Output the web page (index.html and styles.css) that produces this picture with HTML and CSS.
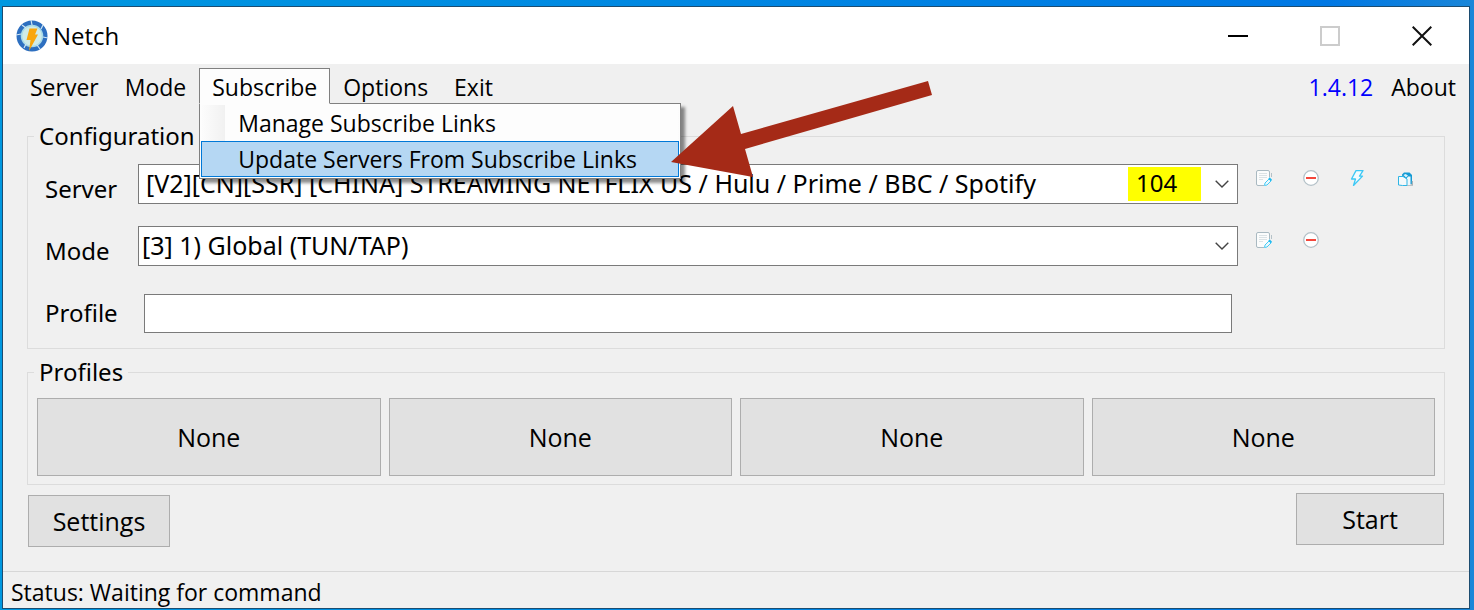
FILE: index.html
```html
<!DOCTYPE html>
<html lang="en">
<head>
<meta charset="utf-8">
<title>Netch</title>
<link rel="stylesheet" href="styles.css">
</head>
<body>
<svg class="symbols" aria-hidden="true">
  <symbol id="edit" viewBox="0 0 16 16">
    <path d="M13.500 7V2q0-1.500-1.500-1.500H2Q.5 .5 .5 2v12q0 1.500 1.500 1.500h6" fill="#fbfcfc" stroke="#a9b9c1"/>
    <path d="M3 3.500h8M3 5.500h8M3 7.500h8M3 9.500h4" stroke="#dbe2e5" fill="none"/>
    <path d="M15.500 3v4" stroke="#b5c2c8"/>
    <path d="M8.500 15.500l.5-2.500 4-4 2 2-4 4z" fill="#e9f8fe" stroke="#45cbf5"/>
    <path d="M13 8l2.500 2.500" stroke="#20b9ef" stroke-width="1.800"/>
  </symbol>
  <symbol id="remove" viewBox="0 0 16 16">
    <circle cx="8" cy="8" r="7.300" fill="#fff" stroke="#b4c1c8" stroke-width="1.300"/>
    <rect x="3" y="7" width="10" height="2" fill="#f4473c"/>
  </symbol>
  <symbol id="bolt" viewBox="0 0 16 16">
    <path d="M6 .6h7l-3.500 5.500h3L3.500 15.500l2-6.500H1.500z" fill="#f3fbfe" stroke="#3dc8f5" stroke-width="1.300" stroke-linejoin="round"/>
  </symbol>
  <symbol id="copy" viewBox="0 0 16 16">
    <path d="M5 4.500l2-2h5.500L15 5v9H6z" fill="#159bd5"/>
    <path d="M15.500 11v4H10" stroke="#a8b3b8" stroke-width="1.500" fill="none"/>
    <path d="M6.500 5l2-1 2.500 1.500-2 2z" fill="#d8f2fc"/>
    <path d="M10 8l1-1.500h2.500V15H10z" fill="#eef8fc"/>
    <path d="M1.500 6.500H6L10 9v6.500H5.500l-4-.5z" fill="#f4f9fb" stroke="#2fb5e5"/>
  </symbol>
  <symbol id="chevron" viewBox="0 0 14 8">
    <path d="M.7 .7L7 7 13.300 .7" fill="none" stroke="#444" stroke-width="1.400"/>
  </symbol>
</svg>

<main class="window">
  <header class="titlebar">
    <svg class="logo" viewBox="0 0 32 32" aria-hidden="true">
      <circle cx="16" cy="16" r="13" fill="#cfebe7" stroke="#2d6fc0" stroke-width="5"/>
      <circle cx="16" cy="16" r="10.500" fill="none" stroke="#a9dbe8" stroke-width="1.500"/>
      <path d="M15 0l1 5M27 5l-2 4M32 18l-5-1M24 29l-3-4M8 28l2-4M0 15l5-1M6 5l4 3" stroke="#cfe6f4" stroke-width="1.200"/>
      <path d="M13.500 8.500h8l-2.500 6h3L13 31l1.500-11h-4z" fill="#f9a60b"/>
    </svg>
    <h1 class="title">Netch</h1>
    <div class="caption">
      <button class="caption-button" aria-label="Minimize"><svg viewBox="0 0 20 20"><path d="M0 10h20" stroke="#000" stroke-width="2"/></svg></button>
      <button class="caption-button" aria-label="Maximize" disabled><svg viewBox="0 0 20 20"><path d="M1 1h18v18H1z" fill="none" stroke="#ccc" stroke-width="2"/></svg></button>
      <button class="caption-button" aria-label="Close"><svg viewBox="0 0 20 20"><path d="M.7 .7l18.600 18.600M19.300 .7L.7 19.300" stroke="#111" stroke-width="2"/></svg></button>
    </div>
  </header>

  <nav class="menubar">
    <button class="menu-item">Server</button>
    <button class="menu-item">Mode</button>
    <div class="menu-group">
      <button class="menu-item menu-item-open" aria-expanded="true">Subscribe</button>
      <div class="dropdown" role="menu">
        <button class="dropdown-item" role="menuitem">Manage Subscribe Links</button>
        <button class="dropdown-item dropdown-item-active" role="menuitem">Update Servers From Subscribe Links</button>
      </div>
    </div>
    <button class="menu-item">Options</button>
    <button class="menu-item">Exit</button>
    <a class="menu-item version" href="#">1.4.12</a>
    <button class="menu-item">About</button>
  </nav>

  <div class="content">
    <fieldset class="group configuration">
      <legend class="legend">Configuration</legend>
      <div class="row">
        <label class="label" for="server">Server</label>
        <div class="combo">
          <select class="select select-server" id="server"><option>[V2][CN][SSR] [CHINA] STREAMING NETFLIX US / Hulu / Prime / BBC / Spotify</option></select>
          <span class="delay">104</span>
          <svg class="chevron"><use href="#chevron"/></svg>
        </div>
        <div class="tools">
          <button class="tool" aria-label="Edit server"><svg><use href="#edit"/></svg></button>
          <button class="tool" aria-label="Delete server"><svg><use href="#remove"/></svg></button>
          <button class="tool" aria-label="Test servers"><svg><use href="#bolt"/></svg></button>
          <button class="tool" aria-label="Copy link"><svg><use href="#copy"/></svg></button>
        </div>
      </div>
      <div class="row">
        <label class="label" for="mode">Mode</label>
        <div class="combo">
          <select class="select" id="mode"><option>[3] 1) Global (TUN/TAP)</option></select>
          <svg class="chevron"><use href="#chevron"/></svg>
        </div>
        <div class="tools">
          <button class="tool" aria-label="Edit mode"><svg><use href="#edit"/></svg></button>
          <button class="tool" aria-label="Delete mode"><svg><use href="#remove"/></svg></button>
        </div>
      </div>
      <div class="row row-profile">
        <label class="label" for="profile">Profile</label>
        <input class="input" id="profile" type="text">
      </div>
    </fieldset>

    <fieldset class="group profiles">
      <legend class="legend">Profiles</legend>
      <div class="profile-list">
        <button class="button">None</button>
        <button class="button">None</button>
        <button class="button">None</button>
        <button class="button">None</button>
      </div>
    </fieldset>

    <div class="actions">
      <button class="button settings">Settings</button>
      <button class="button start">Start</button>
    </div>
  </div>

  <footer class="status">Status: Waiting for command</footer>

  <svg class="arrow" viewBox="0 0 262 98" aria-hidden="true">
    <path d="M0 82L62 26l8 28L257 1l4 14L74 69l8 28z" fill="#a52a17"/>
  </svg>
</main>
</body>
</html>
```
FILE: styles.css
```css
* {
  box-sizing: border-box;
}

body {
  margin: 0;
  min-height: 100vh;
  display: flex;
  padding: 6px 4px 1px 2px;
  background: linear-gradient(90deg, #0098e0, #0078e4 90%, #1a86d8);
  font-family: "Segoe UI", "Noto Sans", "Open Sans", sans-serif;
  font-size: 24px;
  line-height: 28px;
  color: #000;
}

button,
select,
input {
  font: inherit;
  color: inherit;
  margin: 0;
}

button {
  border: 0;
  padding: 0;
  background: none;
}

svg {
  display: block;
}

.symbols {
  position: absolute;
  width: 0;
  height: 0;
}

.window {
  position: relative;
  flex: 1;
  min-width: 0;
  display: flex;
  flex-direction: column;
  border: 1px solid #1c4c70;
  background: #f0f0f0;
}

.titlebar {
  display: flex;
  align-items: center;
  height: 57px;
  padding: 0 1px 0 13px;
  background: #fff;
}

.logo {
  width: 32px;
  height: 32px;
}

.title {
  flex: 1;
  margin: 0 0 0 5px;
  font-family: "Segoe UI", "Open Sans", sans-serif;
  font-size: 24px;
  font-weight: 400;
}

.caption {
  display: flex;
}

.caption-button {
  display: grid;
  place-items: center;
  width: 92px;
  height: 56px;
}

.caption-button svg {
  width: 20px;
  height: 20px;
}

.menubar {
  display: flex;
  align-items: center;
  height: 48px;
  padding: 0 0 4px 14px;
  font-family: "Segoe UI", "Open Sans", sans-serif;
  font-size: 23px;
}

.menu-item {
  height: 36px;
  padding: 0 12px;
  border: 1px solid transparent;
  line-height: 36px;
  white-space: nowrap;
}

.menu-group {
  position: relative;
}

.menu-item-open {
  position: relative;
  z-index: 3;
  border-color: #808080;
  border-bottom-color: #fdfdfd;
  background: #fdfdfd;
}

.dropdown {
  position: absolute;
  z-index: 2;
  top: 35px;
  left: 0;
  width: 482px;
  padding: 1px;
  border: 1px solid #808080;
  background: #fdfdfd;
  box-shadow: 4px 4px 3px rgba(0, 0, 0, 0.45);
}

.dropdown-item {
  display: block;
  width: 100%;
  height: 36px;
  padding-left: 36px;
  border: 1px solid transparent;
  background: linear-gradient(90deg, #fcfcfc, #f1f1f1 23px, #fdfdfd 23px);
  line-height: 34px;
  text-align: left;
  white-space: nowrap;
}

.dropdown-item-active {
  border-color: #0078d7;
  background: #b5d7f3;
}

.version {
  margin-left: auto;
  padding-right: 4px;
  color: #0000ff;
  text-decoration: none;
}

.content {
  flex: 1;
  padding: 10px 24px 0;
}

.group {
  min-width: 0;
  margin: 0;
  border: 1px solid #dcdcdc;
}

.configuration {
  padding: 14px 6px 15px;
}

.legend {
  padding: 0 5px;
}

.row {
  display: grid;
  grid-template-columns: 104px 1fr 200px;
  align-items: start;
  margin-bottom: 22px;
}

.row-profile {
  margin: 28px 0 0;
}

.label {
  padding: 11px 0 0 11px;
}

.row-profile .label {
  padding-top: 5px;
}

.combo {
  position: relative;
}

.select {
  display: block;
  width: 100%;
  height: 40px;
  padding: 0 38px 2px 3px;
  appearance: none;
  border: 1px solid #7a7a7a;
  border-radius: 0;
  background: #fff;
  font-size: 25px;
  line-height: 36px;
}

.select-server {
  padding-left: 7px;
}

.delay {
  position: absolute;
  top: 3px;
  right: 37px;
  width: 73px;
  height: 34px;
  padding-left: 8px;
  background: #ffff00;
  line-height: 32px;
}

.chevron {
  position: absolute;
  top: 16px;
  right: 9px;
  width: 14px;
  height: 8px;
}

.tools {
  display: flex;
  gap: 31px;
  padding: 6px 0 0 18px;
}

.tool,
.tool svg {
  width: 16px;
  height: 16px;
}

.input {
  height: 39px;
  margin: 0 6px;
  padding: 0 6px;
  border: 1px solid #7a7a7a;
  border-radius: 0;
  background: #fff;
}

.profiles {
  margin-top: 9px;
  padding: 12px 9px 8px;
}

.profiles .legend {
  margin-left: -3px;
}

.profile-list {
  display: grid;
  grid-template-columns: repeat(4, 1fr);
  gap: 8px;
}

.button {
  height: 78px;
  border: 1px solid #adadad;
  background: #e1e1e1;
  font-family: "Segoe UI", "Open Sans", sans-serif;
  font-size: 25px;
}

.actions {
  display: flex;
  justify-content: space-between;
  padding: 8px 1px 0;
}

.settings,
.start {
  height: 52px;
}

.settings {
  width: 142px;
  margin-top: 2px;
}

.start {
  width: 148px;
}

.status {
  height: 37px;
  padding-left: 8px;
  border-top: 1px solid #d7d7d7;
  font-family: "Segoe UI", "Open Sans", sans-serif;
  font-size: 23px;
  line-height: 40px;
}

.arrow {
  position: absolute;
  z-index: 4;
  top: 73px;
  left: 668px;
  width: 262px;
  height: 98px;
}
```
